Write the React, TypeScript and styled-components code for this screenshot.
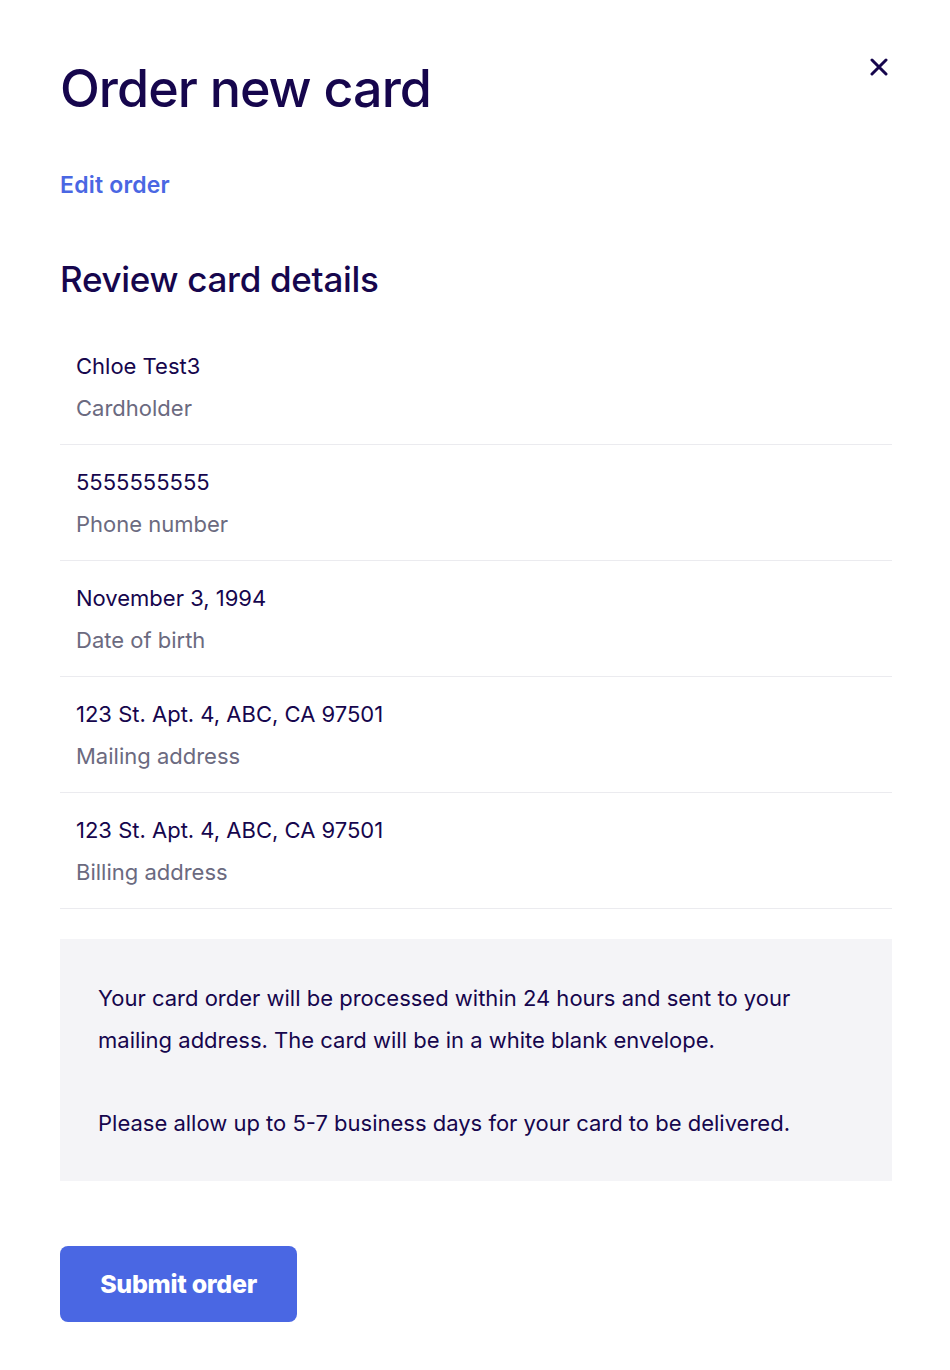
import React from 'react'
import styled, { createGlobalStyle } from 'styled-components'

const GlobalStyle = createGlobalStyle`
  body {
    margin: 0;
    background: #ffffff;
    font-family: Inter, "Noto Sans", sans-serif;
    color: #16064d;
  }
`

type Detail = { value: string; label: string }

const details: Detail[] = [
  { value: 'Chloe Test3', label: 'Cardholder' },
  { value: '5555555555', label: 'Phone number' },
  { value: 'November 3, 1994', label: 'Date of birth' },
  { value: '123 St. Apt. 4, ABC, CA 97501', label: 'Mailing address' },
  { value: '123 St. Apt. 4, ABC, CA 97501', label: 'Billing address' },
]

const App = () => {
  return (
    <>
      <GlobalStyle />
      <Page>
        <Header>
          <Title>Order new card</Title>
          <CloseButton aria-label="Close">
            <svg width="18" height="18" viewBox="0 0 18 18">
              <path d="M2 2 L16 16 M16 2 L2 16" stroke="#16064d" strokeWidth="3" strokeLinecap="round" />
            </svg>
          </CloseButton>
        </Header>
        <EditLink href="#">Edit order</EditLink>
        <SectionTitle>Review card details</SectionTitle>
        <List>
          {details.map((d, i) => (
            <Row key={i}>
              <Value>{d.value}</Value>
              <Label>{d.label}</Label>
            </Row>
          ))}
        </List>
        <Notice>
          <NoticeText>
            Your card order will be processed within 24 hours and sent to your mailing address. The card will be in a white blank envelope.
          </NoticeText>
          <NoticeText>Please allow up to 5-7 business days for your card to be delivered.</NoticeText>
        </Notice>
        <SubmitButton>Submit order</SubmitButton>
      </Page>
    </>
  )
}

export default App

const Page = styled.div`
  width: 832px;
  padding: 56px 58px 40px 60px;
  display: flex;
  flex-direction: column;
  align-items: flex-start;
`

const Header = styled.div`
  width: 100%;
  display: flex;
  justify-content: space-between;
  align-items: flex-start;
`

const Title = styled.h1`
  margin: 0;
  font-size: 52px;
  line-height: 66px;
  font-weight: 500;
  letter-spacing: -1px;
  color: #16064d;
`

const CloseButton = styled.button`
  border: none;
  background: none;
  padding: 0;
  margin: 2px 4px 0 0;
  width: 18px;
  height: 18px;
  cursor: pointer;
  display: flex;
`

const EditLink = styled.a`
  margin-top: 49px;
  font-size: 23px;
  line-height: 28px;
  font-weight: 600;
  letter-spacing: 0.2px;
  color: #4a67e3;
  text-decoration: none;
`

const SectionTitle = styled.h2`
  margin: 58px 0 0;
  font-size: 35px;
  line-height: 44px;
  font-weight: 500;
  letter-spacing: -0.3px;
  color: #16064d;
`

const List = styled.div`
  width: 100%;
  margin-top: 43px;
  display: flex;
  flex-direction: column;
`

const Row = styled.div`
  padding: 7px 16px 21px;
  border-bottom: 1px solid #ebebef;
  display: flex;
  flex-direction: column;
  & + & {
    padding-top: 22px;
  }
`

const Value = styled.div`
  font-size: 22px;
  line-height: 30px;
  color: #16064d;
`

const Label = styled.div`
  margin-top: 12px;
  font-size: 22px;
  line-height: 30px;
  color: #6b6a80;
`

const Notice = styled.div`
  width: 100%;
  box-sizing: border-box;
  margin-top: 30px;
  padding: 38px 38px 37px;
  background: #f4f4f7;
  display: flex;
  flex-direction: column;
  gap: 41px;
`

const NoticeText = styled.p`
  margin: 0;
  font-size: 22px;
  line-height: 42px;
  color: #16064d;
  max-width: 720px;
`

const SubmitButton = styled.button`
  margin-top: 65px;
  width: 237px;
  height: 76px;
  border: none;
  border-radius: 8px;
  background: #4a67e3;
  color: #ffffff;
  font-family: Inter, "Noto Sans", sans-serif;
  font-size: 25px;
  font-weight: 800;
  letter-spacing: -0.3px;
  cursor: pointer;
`
